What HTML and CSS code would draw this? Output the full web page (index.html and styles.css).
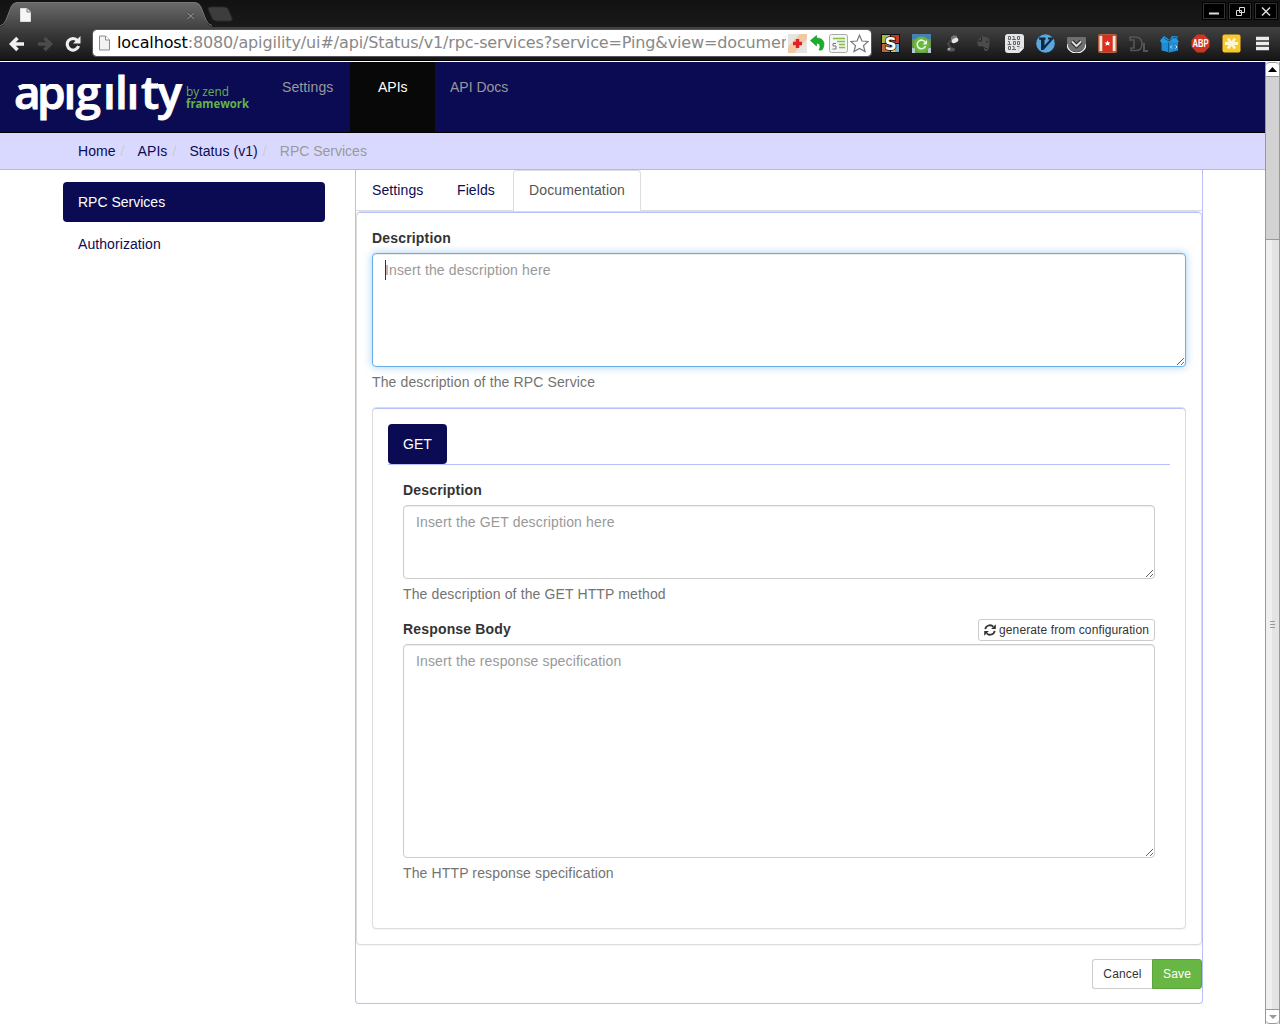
FILE: index.html
```html
<!DOCTYPE html>
<html lang="en">
<head>
<meta charset="utf-8">
<title>Apigility</title>
<link rel="stylesheet" href="styles.css">
</head>
<body>
<header class="chrome">
  <div class="tabstrip">
    <svg class="tabs-shape" width="240" height="28" viewBox="0 0 240 28">
      <defs>
        <linearGradient id="tab" x1="0" y1="0" x2="0" y2="1"><stop offset="0" stop-color="#6a6a6a"/><stop offset="1" stop-color="#424242"/></linearGradient>
      </defs>
      <path d="M0 27 Q4 26 6 21 L11 7 Q13 2.500 17 2.500 H195 Q199 2.500 201 7 L206 21 Q208 26 212 26.500 V28 H0Z" fill="url(#tab)"/>
      <path d="M0 26 Q4 25 6 20 L11 7 Q13 2.500 17 2.500 H195 Q199 2.500 201 7 L206 20 Q208 25 212 25.500" fill="none" stroke="#777" stroke-width="1"/>
      <path d="M208 9 Q208 7 211 7 H224 Q227 7 228 9 L232 18 Q233 21 230 21 H217 Q213 21 212 18Z" fill="#3d3d3d" stroke="#2a2a2a"/>
      <path d="M20.500 8.500 h6.500 l3.500 3.500 v9.500 h-10z" fill="#f6f6f6" stroke="#ddd"/><path d="M27 8.500 v3.500 h3.500" fill="none" stroke="#777"/>
      <path d="M187.500 13 l6.500 6 m0 -6 l-6.500 6" stroke="#3d3d3d" stroke-width="2.600"/><path d="M187.500 13 l6.500 6 m0 -6 l-6.500 6" stroke="#858585" stroke-width="1.300"/>
    </svg>
    <div class="window-buttons">
      <svg width="22" height="17"><path d="M5 9.500h10" stroke="#ddd" stroke-width="2"/></svg>
      <svg width="22" height="17"><path d="M9.500 3.500h5v5h-5z M6.500 6.500h5v5h-5z" fill="none" stroke="#ddd"/></svg>
      <svg width="22" height="17"><path d="M6 3.500l8 8m0-8l-8 8" stroke="#ddd" stroke-width="1.500"/></svg>
    </div>
  </div>
  <div class="toolbar">
    <div class="nav-icons">
      <svg width="16" height="16" viewBox="0 0 16 16"><path d="M15 8H3M8.500 2L2.500 8L8.500 14" fill="none" stroke="#f0f0f0" stroke-width="3.600"/></svg>
      <svg width="16" height="16" viewBox="0 0 16 16"><path d="M1 8H13M7.500 2L13.500 8L7.500 14" fill="none" stroke="#4b4b4b" stroke-width="3.600"/></svg>
      <svg width="16" height="16" viewBox="0 0 16 16"><path d="M12.500 4.500A5.800 5.800 0 1 0 13.600 10" fill="none" stroke="#eee" stroke-width="3.100"/><path d="M15.500 0V7.500H8Z" fill="#eee"/></svg>
    </div>
    <div class="omnibox">
      <svg width="13" height="16" viewBox="0 0 13 16"><path d="M1.500 1h6l4 4v10h-10z" fill="#f2f2f2" stroke="#8b8b8b"/><path d="M7.500 1v4h4" fill="#fff" stroke="#8b8b8b"/></svg>
      <span class="url"><b>localhost</b>:8080/apigility/ui#/api/Status/v1/rpc-services?service=Ping&amp;view=documen</span>
      <svg width="19" height="19" viewBox="0 0 19 19"><rect width="19" height="19" fill="#e6e3e0"/><path d="M0 13L12 0H19V5L6 19H0Z" fill="#f0c8a4"/><path d="M9.500 5v9M5 9.500h9" stroke="#e31e24" stroke-width="3.400"/></svg>
      <svg width="18" height="18" viewBox="0 0 18 18"><path d="M1.500 6.500L7.500 1.500V4C14 4 17 8.500 13.500 15.500Q12 16.500 10 16C12 12 11 9.300 7.500 9.300V12Z" fill="#1cae2b" stroke="#168a22" stroke-width=".6"/></svg>
      <svg width="19" height="19" viewBox="0 0 19 19"><rect x=".5" y=".5" width="18" height="18" rx="2" fill="#f5f5f5" stroke="#aaa"/><path d="M4 4.500h12M8 7.500h8M10 10.500h6M10 13.500h6" stroke="#85c13e" stroke-width="1.500"/><path d="M7 9.500H4v2.500h3v3H3.500" fill="none" stroke="#777"/></svg>
      <svg width="19" height="19" viewBox="0 0 19 19"><path d="M9.500 1.200L12 7l6.200.5-4.700 4.100 1.500 6-5.500-3.200L4 17.600l1.500-6L.8 7.500 7 7Z" fill="#fff" stroke="#777" stroke-width="1.200"/></svg>
    </div>
    <div class="extensions">
      <svg viewBox="0 0 19 19"><rect width="19" height="19" fill="#111"/><path d="M1 1h8v8H1z" fill="#a9b94c"/><path d="M10 1h8v8h-8z" fill="#c53b2b"/><path d="M1 10h8v8H1z" fill="#b8683a"/><path d="M10 10h4v8h-4z" fill="#e9c15d"/><path d="M14 10h4v8h-4z" fill="#78aed2"/><text x="9.500" y="15.500" class="letter-s">S</text></svg>
      <svg viewBox="0 0 19 19"><rect width="19" height="8" fill="#477fb3"/><path d="M0 5h19v14H0z" fill="#6d9651"/><path d="M0 14h3v5H0zM16 14h3v5h-3z" fill="#b8c6d8"/><circle cx="9.500" cy="10.500" r="8" fill="#67b83c"/><path d="M13.300 8.500A4.300 4.300 0 1 0 13.500 12" fill="none" stroke="#e9f8df" stroke-width="1.600"/><path d="M15 6v4.500h-4.500z" fill="#e9f8df"/></svg>
      <svg viewBox="0 0 19 19"><path d="M8 3Q11 0 14 2L15 7Q11 10 8 8Z" fill="#777"/><ellipse cx="12" cy="6.500" rx="3.500" ry="2.300" transform="rotate(-25 12 6.500)" fill="#e5e5e5"/><path d="M8 6L5 10L8 14" fill="none" stroke="#484848" stroke-width="2"/><ellipse cx="8" cy="15.500" rx="4" ry="2" fill="#555"/><circle cx="6" cy="15" r="1.300" fill="#aaa"/></svg>
      <svg viewBox="0 0 19 19"><path d="M3 7L7 2.500Q9 2 11 3Q15 3 15.500 6Q16 12 14 16Q12 18 10 16Q9 14 11 13Q8 12 6 12.500Q3 12 3 7Z" fill="#4b4b4b"/><path d="M3.500 7h4V3M11 14.500h2M12 8q1-1 2 0" fill="none" stroke="#222"/></svg>
      <svg viewBox="0 0 19 19"><path d="M0 3q0-3 3-3h13q3 0 3 3v11l-5 5H3q-3 0-3-3z" fill="#e4e7e9"/><path d="M14 19v-5h5z" fill="#fff" stroke="#aaa" stroke-width=".6"/><g fill="none" stroke="#666"><path d="M3.500 2.500h2v3h-2zM12.500 2.500h2v3h-2zM8.500 7.500h2v3h-2zM12.500 7.500h2v3h-2zM3.500 12.500h2v3h-2zM7.500 2.500h1.500v3M7 5.500h4M3 7.500h1.500v3M2.500 10.500h4M7.500 12.500h1.500v3M7 15.500h4M12 12.500h2.500"/></g></svg>
      <svg viewBox="0 0 19 19"><circle cx="9.500" cy="9.500" r="9.300" fill="#5aa7df"/><path d="M3 3.500h6.500v2L8.500 6v5.500L14 5.500h-2v-2h5v1.800L7.500 16H5V6L3 5.500z" fill="#10293e"/></svg>
      <svg viewBox="0 0 19 19"><path d="M0 4q0-1 1-1h17q1 0 1 1v5a9.500 9 0 0 1-19 0z" fill="#6f6f6f"/><path d="M0 10a9.500 9 0 0 0 19 0" fill="none" stroke="#eee" stroke-width="1.300"/><path d="M5 7.500l4.500 4.500L14 7.500" fill="none" stroke="#222" stroke-width="4"/><path d="M5 7.500l4.500 4.500L14 7.500" fill="none" stroke="#ddd" stroke-width="2"/></svg>
      <svg viewBox="0 0 19 19"><rect width="19" height="19" rx="2" fill="#b45b38"/><path d="M1.500 2h3v15h-3zM14.500 2h3v15h-3z" fill="#f3eadf"/><path d="M4.500 1h10v17h-10z" fill="#dd2c20"/><path d="M9.500 6.500l1 2h2l-1.500 1.300.5 2-2-1-2 1 .5-2-1.500-1.300h2z" fill="#fff"/></svg>
      <svg viewBox="0 0 19 19"><path d="M1 3h5q7 0 7 7t-7 6.500H2V14h3V6H1z" fill="none" stroke="#555" stroke-width="1.600"/><path d="M15 9v8h4" fill="none" stroke="#555" stroke-width="2"/></svg>
      <svg viewBox="0 0 19 19"><path d="M1.500 8l8-1 8.500 1v8.500L9.500 18.500l-8-2z" fill="#218bd3"/><path d="M0 6.500L4 2l5 3.500L7 9H1.500zM9.500 6l2.500-4 6 .5-1 2.500 2 3-7 .5z" fill="#2799df"/><path d="M4 4l4 2.500M10 6.500l3-3 4 .5M8.500 9v9" fill="none" stroke="#0d568c"/><path d="M12 11.500l-1.500 1.500 1.500 1.500m3.500-3l1.500 1.500-1.500 1.500" fill="none" stroke="#c6e9ff"/></svg>
      <svg viewBox="0 0 19 19"><path d="M6 .5h7L18.500 6v7L13 18.500H6L.5 13V6z" fill="#cf3520"/><text x="9.500" y="13" class="abp" textLength="16" lengthAdjust="spacingAndGlyphs">ABP</text></svg>
      <svg viewBox="0 0 19 19"><rect x=".5" y=".5" width="18" height="18" rx="2" fill="#f7c92b"/><path d="M3 9.500h13M6 4.500l7 10M13 4.500L6 14.500" stroke="#fff5ce" stroke-width="2.800"/></svg>
      <svg viewBox="0 0 19 19"><path d="M3 4.500h13M3 9.500h13M3 14.500h13" stroke="#ececec" stroke-width="3.400"/></svg>
    </div>
  </div>
</header>
<div class="viewport">
  <div class="page">
    <nav class="navbar">
      <svg class="logo" width="252" height="70" viewBox="0 0 252 70">
        <clipPath id="dotless"><path d="M0 22H117.500V0H126.500V22H140V12H158V22H186V70H0Z"/></clipPath>
        <g clip-path="url(#dotless)"><text x="14 37 63.500 75.500 103 115 126.500 141 157.500" y="47" class="logo-name">apigility</text></g>
        <text x="186" y="34" class="logo-by" textLength="43" lengthAdjust="spacingAndGlyphs">by zend</text>
        <text x="186" y="46" class="logo-fw" textLength="63" lengthAdjust="spacingAndGlyphs">framework</text>
      </svg>
      <a class="nav-link">Settings</a>
      <a class="nav-link active">APIs</a>
      <a class="nav-link">API Docs</a>
    </nav>
    <div class="breadcrumb"><a>Home</a><i>/</i><a>APIs</a><i>/</i><a>Status (v1)</a><i>/</i><span>RPC Services</span></div>
    <div class="columns">
      <aside class="sidebar">
        <a class="side-link active">RPC Services</a>
        <a class="side-link spaced">Authorization</a>
      </aside>
      <main class="service">
        <div class="tabs"><a class="tab">Settings</a><a class="tab">Fields</a><a class="tab active">Documentation</a></div>
        <section class="panel outer">
          <label>Description</label>
          <div class="field"><textarea class="control tall focused" placeholder="Insert the description here"></textarea><span class="caret"></span></div>
          <p class="help">The description of the RPC Service</p>
          <section class="panel method">
            <div class="pills"><a class="pill">GET</a></div>
            <div class="method-body">
              <label>Description</label>
              <div class="field"><textarea class="control short" placeholder="Insert the GET description here"></textarea></div>
              <p class="help">The description of the GET HTTP method</p>
              <div class="label-row">
                <label>Response Body</label>
                <button class="generate"><svg width="12" height="12" viewBox="0 0 12 12"><path d="M1.300 5.200A4.700 4.700 0 0 1 9.300 2.700M10.700 6.800A4.700 4.700 0 0 1 2.700 9.300" fill="none" stroke="#333" stroke-width="1.800"/><path d="M11.800 .3V5H7.100ZM.2 11.700V7H4.900Z" fill="#333"/></svg>generate from configuration</button>
              </div>
              <div class="field"><textarea class="control large" placeholder="Insert the response specification"></textarea></div>
              <p class="help">The HTTP response specification</p>
            </div>
          </section>
        </section>
        <div class="actions"><button class="btn cancel">Cancel</button><button class="btn save">Save</button></div>
      </main>
    </div>
  </div>
  <div class="scrollbar">
    <div class="arrow up"><svg width="9" height="5"><path d="M0 5L4.500 0L9 5Z" fill="#000"/></svg></div>
    <div class="thumb"></div>
    <div class="track"><svg width="5" height="8"><path d="M0 .5h5M0 3.500h5M0 6.500h5" stroke="#999"/></svg></div>
    <div class="arrow down"><svg width="8" height="4"><path d="M0 0H8L4 4Z" fill="#999"/></svg></div>
  </div>
</div>
</body>
</html>
```
FILE: styles.css
```css
* { box-sizing: border-box; }
body {
  margin: 0;
  width: 1280px;
  height: 1024px;
  overflow: hidden;
  display: flex;
  flex-direction: column;
  background: #fff;
  color: #333;
  font: 14px/20px "Liberation Sans", Arial, sans-serif;
}
svg { display: block; flex: none; }

/* Browser frame */
.chrome { height: 62px; border-bottom: 1px solid #fff; background: #111; }
.tabstrip { height: 27px; display: flex; justify-content: space-between; background: linear-gradient(#121212, #191919); }
.window-buttons { display: flex; gap: 4px; padding: 3px 3px 0 0; }
.window-buttons svg { background: #000; border: 1px solid #333; outline: 1px solid #000; height: 16px; }
.toolbar {
  height: 34px;
  display: flex;
  align-items: center;
  background: linear-gradient(#424242, #151515);
  border-bottom: 1px solid #000;
}
.nav-icons { display: flex; gap: 12px; width: 92px; padding-left: 9px; }
.omnibox {
  width: 780px;
  height: 28px;
  margin-top: -1px;
  padding: 0 2px 0 5px;
  display: flex;
  align-items: center;
  gap: 2px;
  background: #fff;
  border: 1px solid #222;
  outline: 1px solid #555;
  outline-offset: -1px;
  border-radius: 4px;
}
.url {
  flex: 1;
  min-width: 0;
  margin-left: 4px;
  overflow: hidden;
  white-space: nowrap;
  color: #888;
  font: 16px/24px "DejaVu Sans", sans-serif;
  letter-spacing: -.13px;
}
.url b { color: #000; font-weight: normal; }
.extensions { display: flex; gap: 12px; padding-left: 9px; }
.extensions svg { width: 19px; height: 19px; }
.letter-s { font: bold 17px "DejaVu Sans", sans-serif; fill: #fff; stroke: #111; stroke-width: 1.5px; paint-order: stroke; text-anchor: middle; }
.abp { font: bold 10px "Liberation Sans", sans-serif; fill: #fff; text-anchor: middle; }

/* Page */
.viewport { flex: 1; display: flex; min-height: 0; }
.page { width: 1265px; }
.navbar { height: 71px; display: flex; background: #0b0b54; border-bottom: 1px solid #000; }
.logo-name { font: 600 46px "Open Sans", sans-serif; fill: #fff; stroke: #fff; stroke-width: .9px; }
.logo-by { font: 13.5px "Open Sans", sans-serif; fill: #63b246; }
.logo-fw { font: bold 12.5px "Open Sans", sans-serif; fill: #63b246; }
.logo { margin-right: 15px; }
.nav-link { padding: 15px 0; color: #999; }
.nav-link:nth-of-type(1) { padding: 15px; width: 83px; letter-spacing: .1px; }
.nav-link.active { width: 85px; padding: 15px 28px; margin-right: 15px; background: #080808; color: #fff; }
.breadcrumb {
  height: 37px;
  padding: 8px 78px;
  display: flex;
  background: #d9d9ff;
  border-bottom: 1px solid #b4b4fa;
  color: #999;
}
.breadcrumb a, .side-link, .tab { color: #0b0b54; }
.breadcrumb a { letter-spacing: .06px; }
.breadcrumb i { width: 4px; margin: 0 13px 0 5px; color: #ccc; font-style: normal; }
.columns { display: flex; gap: 30px; padding-left: 63px; }
.sidebar { width: 262px; padding-top: 12px; display: flex; flex-direction: column; gap: 2px; }
.side-link { padding: 10px 15px; border-radius: 4px; }
.side-link.active { background: #0b0b54; color: #fff; }
.side-link.spaced { letter-spacing: .08px; }
.service { width: 848px; height: 834px; border: 1px solid #b8c0fa; border-top: 0; border-radius: 0 0 4px 4px; }
.tabs { display: flex; gap: 2px; height: 41px; border-bottom: 1px solid #ddd; }
.tab { height: 41px; padding: 10px 15px; border: 1px solid transparent; border-top-width: 0; letter-spacing: .1px; }
.tab:first-child { width: 83px; }
.tab:nth-child(2) { width: 70px; }
.tab.active { width: 128px; letter-spacing: .14px; color: #555; background: #fff; border-color: #ddd; border-top-width: 1px; border-bottom: 0; padding-top: 9px; border-radius: 4px 4px 0 0; }
.panel { border: 1px solid #ddd; border-radius: 4px; padding: 15px; background: #fff; box-shadow: inset 0 1px 0 #b8c0fa, 0 1px 1px rgba(0, 0, 0, .05); }
.outer { height: 734px; padding-top: 16px; }
.method { height: 522px; margin-top: 15px; padding-top: 16px; }
label { display: block; margin-bottom: 5px; font-weight: bold; letter-spacing: .17px; }
.field { position: relative; }
.control {
  display: block;
  width: 100%;
  padding: 6px 12px;
  border: 1px solid #ccc;
  border-radius: 4px;
  outline: 0;
  resize: vertical;
  font: inherit;
  letter-spacing: .14px;
  color: #555;
  box-shadow: inset 0 1px 1px rgba(0, 0, 0, .075);
}
.control::placeholder { color: #999; }
.tall { height: 114px; }
.short { height: 74px; }
.large { height: 214px; }
.focused { border-color: #66afe9; box-shadow: inset 0 1px 1px rgba(0, 0, 0, .075), 0 0 8px rgba(102, 175, 233, .6); }
.caret { position: absolute; left: 13px; top: 7px; width: 1px; height: 20px; background: #333; }
.help { margin: 5px 0 0; color: #737373; letter-spacing: .13px; }
.pills { height: 41px; display: flex; border-bottom: 1px solid #b8c0fa; }
.pill { height: 40px; padding: 10px 15px; border-radius: 4px; background: #0b0b54; color: #fff; }
.method-body { padding: 15px 15px 0; }
.label-row { display: flex; justify-content: space-between; height: 25px; margin-top: 15px; }
.generate {
  display: flex;
  gap: 3px;
  width: 177px;
  height: 22px;
  padding: 1px 5px;
  border: 1px solid #ccc;
  border-radius: 3px;
  background: #fff;
  color: #333;
  font: 12px/18px "Liberation Sans", Arial, sans-serif;
  letter-spacing: .12px;
  white-space: nowrap;
}
.generate svg { margin-top: 3px; }
.actions { display: flex; justify-content: flex-end; margin-top: 14px; }
.btn { height: 30px; padding: 5px 0; text-align: center; font: 12px/18px "Liberation Sans", Arial, sans-serif; letter-spacing: .15px; }
.cancel { width: 60px; border: 1px solid #ccc; border-right: 0; border-radius: 3px 0 0 3px; background: #fff; color: #333; }
.save { width: 50px; border: 1px solid #5ba33b; border-radius: 0 3px 3px 0; background: #68b744; color: #fff; }

/* Scrollbar */
.scrollbar { width: 15px; display: flex; flex-direction: column; border: solid #999; border-width: 0 1px; background: #eee; }
.arrow { height: 15px; display: flex; align-items: center; justify-content: center; background: #fff; border: 1px solid #999; border-width: 1px 0; }
.up { border-radius: 4px 4px 0 0; }
.down { border-radius: 0 0 4px 4px; }
.thumb { height: 163px; background: #d2d2d2; border-bottom: 1px solid #999; }
.track { flex: 1; display: flex; align-items: center; justify-content: center; background: linear-gradient(90deg, #efefef 50%, #e3e3e3 50%); }
```
